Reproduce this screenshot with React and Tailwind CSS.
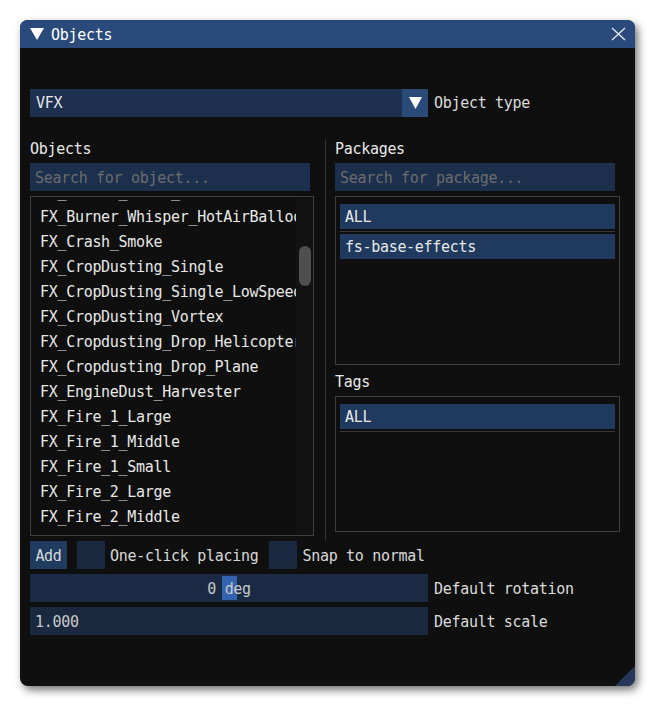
import React from 'react';

const mono = "font-['DejaVu_Sans_Mono',monospace] text-[15px] tracking-[-0.3px]";

const objects = [
  'FX_Burner_Small_HotAirBalloon',
  'FX_Burner_Whisper_HotAirBalloon',
  'FX_Crash_Smoke',
  'FX_CropDusting_Single',
  'FX_CropDusting_Single_LowSpeed',
  'FX_CropDusting_Vortex',
  'FX_Cropdusting_Drop_Helicopter',
  'FX_Cropdusting_Drop_Plane',
  'FX_EngineDust_Harvester',
  'FX_Fire_1_Large',
  'FX_Fire_1_Middle',
  'FX_Fire_1_Small',
  'FX_Fire_2_Large',
  'FX_Fire_2_Middle',
];

function SelItem({ label }) {
  return (
    <div className="flex flex-col">
      <div className="h-[25px] bg-[#1f3a5e] flex items-center pl-[5px] pt-[1px] text-[#e8e8e8]">{label}</div>
      <div className="h-[1px] mt-[2px] mb-[2px] bg-[#3a3a3a]" />
    </div>
  );
}

export default function App() {
  return (
    <div className={`min-h-[706px] bg-white pt-[20px] pl-[20px] ${mono}`}>
      <div className="relative w-[615px] h-[666px] rounded-[8px] bg-[#0f0f0f] overflow-hidden shadow-[3px_4px_8px_rgba(0,0,0,0.55)]">
        {/* title bar */}
        <div className="h-[28px] bg-[#294a7a] flex items-center pl-[10px] pr-[9px] text-white">
          <svg width="14" height="12" viewBox="0 0 14 12">
            <polygon points="0,0 14,0 7,12" fill="#ffffff" />
          </svg>
          <span className="ml-[7px] pt-[2px]">Objects</span>
          <svg className="ml-auto" width="15" height="14" viewBox="0 0 15 14">
            <path d="M1 1 L14 13 M14 1 L1 13" stroke="#e6e6e6" strokeWidth="1.3" fill="none" />
          </svg>
        </div>

        <div className="pl-[10px] pt-[40px]">
          {/* combo */}
          <div className="flex items-center h-[28px] pt-[1px]">
            <div className="w-[398px] h-[28px] bg-[#1d3050] flex items-center">
              <span className="pl-[6px] pt-[1px] flex-1 text-[#e8e8e8]">VFX</span>
              <div className="w-[26px] h-[28px] bg-[#2a4a78] flex items-center justify-center">
                <svg width="13" height="12" viewBox="0 0 13 12">
                  <polygon points="0,0 13,0 6.5,12" fill="#ffffff" />
                </svg>
              </div>
            </div>
            <span className="ml-[6px] pt-[1px] text-[#dcdcdc]">Object type</span>
          </div>

          {/* columns */}
          <div className="flex mt-[23px] h-[402px]">
            {/* left */}
            <div className="w-[284px] flex flex-col">
              <div className="h-[18px] flex items-center pt-[2px] text-[#e8e8e8]">Objects</div>
              <div className="mt-[6px] w-[280px] h-[28px] bg-[#1c2f4d] flex items-center pl-[5px] pt-[2px] text-[#6c6c6c]">
                Search for object...
              </div>
              <div className="mt-[5px] h-[340px] border border-[#3e3e3e] flex overflow-hidden">
                <div className="w-[265px] overflow-hidden">
                  <div className="mt-[-17px] pl-[9px]">
                    {objects.map(o => (
                      <div key={o} className="h-[25px] flex items-center whitespace-nowrap text-[#e8e8e8]">{o}</div>
                    ))}
                  </div>
                </div>
                <div className="flex-1 bg-[#121212] pl-[3px] pr-[2px] pt-[49px]">
                  <div className="h-[40px] rounded-full bg-[#4f4f4f]" />
                </div>
              </div>
            </div>

            {/* separator */}
            <div className="ml-[11px] w-[1px] bg-[#333333]" />

            {/* right */}
            <div className="ml-[9px] w-[285px] flex flex-col">
              <div className="h-[18px] flex items-center pt-[2px] text-[#e8e8e8]">Packages</div>
              <div className="mt-[6px] w-[280px] h-[28px] bg-[#1c2f4d] flex items-center pl-[5px] pt-[2px] text-[#6c6c6c]">
                Search for package...
              </div>
              <div className="mt-[5px] h-[169px] border border-[#3e3e3e] pt-[7px] pl-[4px] pr-[4px]">
                <SelItem label="ALL" />
                <div className="h-[25px] bg-[#1f3a5e] flex items-center pl-[5px] pt-[1px] text-[#e8e8e8]">fs-base-effects</div>
              </div>
              <div className="mt-[8px] h-[18px] flex items-center text-[#e8e8e8]">Tags</div>
              <div className="mt-[5px] h-[136px] border border-[#3e3e3e] pt-[7px] pl-[4px] pr-[4px]">
                <SelItem label="ALL" />
              </div>
            </div>
          </div>

          {/* options row */}
          <div className="flex items-center h-[28px]">
            <div className="w-[37px] h-[28px] bg-[#1f3b5e] flex items-center justify-center pt-[2px] text-[#d8d8d8]">Add</div>
            <div className="ml-[10px] w-[28px] h-[28px] bg-[#1a2840]" />
            <span className="ml-[5px] pt-[2px] text-[#d8d8d8]">One-click placing</span>
            <div className="ml-[11px] w-[28px] h-[28px] bg-[#1a2840]" />
            <span className="ml-[5px] pt-[2px] text-[#d8d8d8]">Snap to normal</span>
          </div>

          {/* rotation slider */}
          <div className="mt-[5px] flex items-center h-[28px]">
            <div className="relative w-[398px] h-[28px] bg-[#1a2a44] flex items-center justify-center">
              <div className="absolute left-[192px] top-[2px] w-[15px] h-[24px] bg-[#3463ad]" />
              <span className="relative pt-[2px] text-[#c8c8c8]">0 deg</span>
            </div>
            <span className="ml-[6px] pt-[2px] text-[#dcdcdc]">Default rotation</span>
          </div>

          {/* scale */}
          <div className="mt-[5px] flex items-center h-[28px]">
            <div className="w-[398px] h-[28px] bg-[#1a2840] flex items-center pl-[5px] pt-[2px] text-[#c8c8c8]">1.000</div>
            <span className="ml-[6px] pt-[2px] text-[#dcdcdc]">Default scale</span>
          </div>
        </div>

        {/* resize grip */}
        <svg className="absolute right-0 bottom-0" width="20" height="20" viewBox="0 0 20 20">
          <polygon points="20,0 20,20 0,20" fill="#24395a" />
        </svg>
      </div>
    </div>
  );
}
